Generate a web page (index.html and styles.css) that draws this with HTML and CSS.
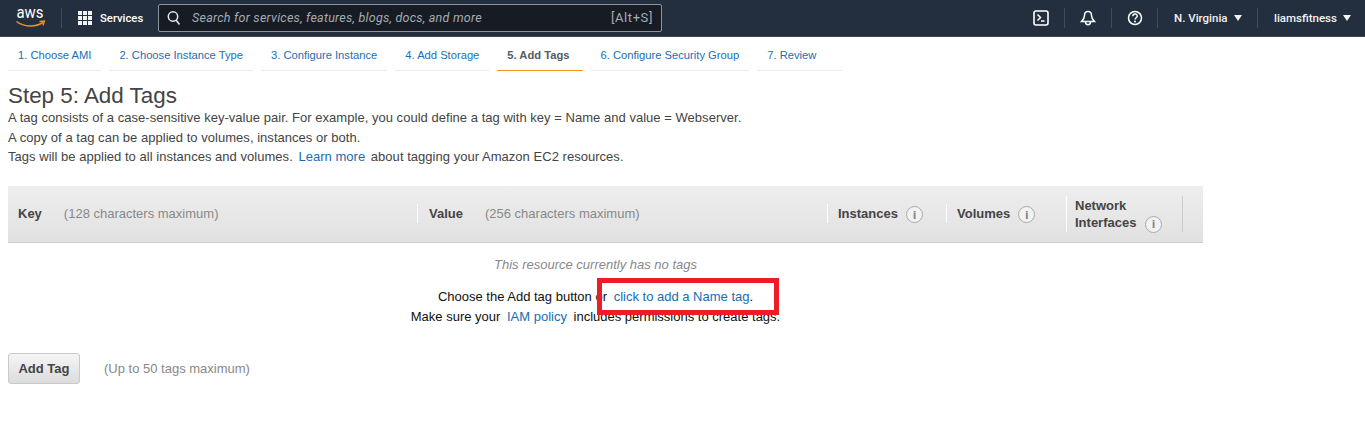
FILE: index.html
```html
<!DOCTYPE html>
<html lang="en">
<head>
<meta charset="utf-8">
<title>Step 5: Add Tags</title>
<link rel="stylesheet" href="styles.css">
</head>
<body>
<header class="topbar">
  <svg class="logo" width="34" height="22" viewBox="0 0 34 22">
    <text x="1.500" y="11" class="logo-text" textLength="27" lengthAdjust="spacingAndGlyphs">aws</text>
    <path d="M1.500 14.500C9 20 20 20.500 28 15.500" fill="none" stroke="#ec912d" stroke-width="1.500"/>
    <path d="M24.500 14.500l5-.5-1.500 4.500" fill="none" stroke="#ec912d" stroke-width="1.300"/>
  </svg>
  <span class="bar-sep sep-logo"></span>
  <div class="services">
    <span class="grid-icon"><i></i><i></i><i></i><i></i><i></i><i></i><i></i><i></i><i></i></span>
    <span>Services</span>
  </div>
  <div class="search">
    <svg width="14" height="16" viewBox="0 0 14 16"><circle cx="6" cy="6.500" r="4.700" fill="none" stroke="#e8eaea" stroke-width="1.500"/><path d="M9.200 10.200l3.300 4.300" stroke="#e8eaea" stroke-width="1.500"/></svg>
    <span class="search-text">Search for services, features, blogs, docs, and more</span>
    <span class="search-key">[Alt+S]</span>
  </div>
  <div class="bar-right">
    <span class="icon-cell cell-term">
      <svg width="16" height="16" viewBox="0 0 16 16"><rect x="1" y="1" width="14" height="14" rx="2" fill="none" stroke="#fff" stroke-width="1.600"/><path d="M4.500 4.500l3 3-3 3M8 11h3.500" fill="none" stroke="#fff" stroke-width="1.500"/></svg>
    </span>
    <span class="bar-sep"></span>
    <span class="icon-cell cell-bell">
      <svg width="16" height="16" viewBox="0 0 16 16"><path d="M8 1.500c-2.500 0-3.500 2-3.500 4 0 2.500-1 4-3 6h13c-2-2-3-3.500-3-6 0-2-1-4-3.500-4z" fill="none" stroke="#fff" stroke-width="1.500"/><path d="M5.500 12c0 3.500 5 3.500 5 0" fill="none" stroke="#fff" stroke-width="1.500"/></svg>
    </span>
    <span class="bar-sep"></span>
    <span class="icon-cell cell-help">
      <svg width="16" height="16" viewBox="0 0 16 16"><circle cx="8" cy="8" r="6.500" fill="none" stroke="#fff" stroke-width="1.500"/><path d="M5.800 6.300c0-3 4.500-3 4.500-.2 0 1.700-2.300 1.700-2.300 3.500" fill="none" stroke="#fff" stroke-width="1.400"/><circle cx="8" cy="11.500" r="1" fill="#fff"/></svg>
    </span>
    <span class="bar-sep"></span>
    <span class="menu menu-region">N. Virginia<b class="caret"></b></span>
    <span class="bar-sep"></span>
    <span class="menu menu-user">liamsfitness<b class="caret"></b></span>
  </div>
</header>

<nav class="steps">
  <a class="step">1. Choose AMI</a>
  <a class="step">2. Choose Instance Type</a>
  <a class="step">3. Configure Instance</a>
  <a class="step">4. Add Storage</a>
  <a class="step current">5. Add Tags</a>
  <a class="step">6. Configure Security Group</a>
  <a class="step last">7. Review</a>
</nav>

<main class="content">
  <h1>Step 5: Add Tags</h1>
  <p>A tag consists of a case-sensitive key-value pair. For example, you could define a tag with key = Name and value = Webserver.</p>
  <p>A copy of a tag can be applied to volumes, instances or both.</p>
  <p>Tags will be applied to all instances and volumes. <a class="link learn">Learn more</a> about tagging your Amazon EC2 resources.</p>

  <div class="table-head">
    <div class="col col-key"><strong>Key</strong><span class="hint">(128 characters maximum)</span></div>
    <div class="col col-value"><strong>Value</strong><span class="hint">(256 characters maximum)</span></div>
    <div class="col col-inst"><strong>Instances</strong><span class="info">i</span></div>
    <div class="col col-vol"><strong>Volumes</strong><span class="info">i</span></div>
    <div class="col col-net"><strong>Network<br>Interfaces <span class="info inline">i</span></strong></div>
  </div>

  <div class="empty">
    <div class="empty-title">This resource currently has no tags</div>
    <div class="empty-line">Choose the Add tag button or <span class="mark"><a class="link name-tag">click to add a Name tag</a>.</span></div>
    <div class="empty-line">Make sure your <a class="link policy">IAM policy</a> includes permissions to create tags.</div>
  </div>

  <div class="actions">
    <button class="btn" type="button">Add Tag</button>
    <span class="limit">(Up to 50 tags maximum)</span>
  </div>
</main>
</body>
</html>
```

FILE: styles.css
```css
*, *::after { box-sizing: border-box; }
html, body { margin: 0; padding: 0; }
body {
  background: #fff;
  font-family: "Liberation Sans", Arial, sans-serif;
  font-size: 13px;
  color: #444;
  height: 421px;
  overflow: hidden;
}
.topbar {
  height: 37px;
  background: #232f3e;
  display: flex;
  align-items: center;
  padding-left: 15px;
  color: #fff;
  border-bottom: 1px solid #3b4654;
}
.logo { flex: none; overflow: visible; }
.logo-text { font-family: "Roboto", sans-serif; font-size: 17px; fill: #fff; }
.bar-sep { width: 1px; height: 20px; background: #414b58; flex: none; }
.sep-logo { margin-left: 12px; }
.services {
  display: flex;
  align-items: center;
  gap: 8px;
  margin-left: 16px;
  font-family: "Roboto", sans-serif;
  font-size: 11.300px;
  font-weight: 500;
  width: 80px;
  flex: none;
}
.grid-icon {
  display: grid;
  grid-template-columns: repeat(3, 4px);
  grid-auto-rows: 4px;
  gap: 1px;
}
.grid-icon i { background: #f2f3f3; display: block; }
.search {
  width: 504px;
  height: 28px;
  flex: none;
  margin-bottom: 1px;
  background: #161b24;
  border: 1px solid #8d959f;
  border-radius: 2px;
  display: flex;
  align-items: center;
  padding: 0 8px;
  color: #a6acb3;
  font-family: "Roboto", sans-serif;
  font-size: 12.500px;
}
.search svg { flex: none; }
.search-text { font-style: italic; margin-left: 11px; letter-spacing: .25px; }
.search-key { margin-left: auto; font-size: 13px; letter-spacing: .6px; }
.bar-right { margin-left: auto; display: flex; align-items: center; }
.icon-cell { display: flex; align-items: center; justify-content: center; }
.cell-term { width: 46px; }
.cell-bell { width: 46px; }
.cell-help { width: 45px; }
.menu {
  font-family: "Roboto", sans-serif;
  font-size: 11.500px;
  font-weight: 500;
  display: flex;
  align-items: center;
  color: #f2f3f3;
  padding-left: 16px;
}
.menu-region { width: 99px; }
.menu-user { width: 107px; }
.caret {
  width: 0;
  height: 0;
  border-left: 4px solid transparent;
  border-right: 4px solid transparent;
  border-top: 6px solid #f2f3f3;
  margin-left: 6px;
}
.steps {
  display: flex;
  gap: 8px;
  padding-left: 8px;
  height: 34px;
}
.step {
  display: flex;
  align-items: center;
  height: 34px;
  padding: 2px 10px 0;
  color: #196eb8;
  font-size: 11.200px;
  border-bottom: 1px solid #eaeded;
}
.current { color: #545b64; font-weight: 700; padding: 2px 13px 0 10px; border-bottom-color: #f7981d; }
.last { padding-right: 26px; }
.content { padding-left: 8px; }
h1 {
  margin: 13px 0 0;
  font-size: 22.400px;
  line-height: 24px;
  font-weight: 400;
  color: #444;
}
p {
  margin: 0;
  font-size: 13px;
  line-height: 19.500px;
  letter-spacing: .03px;
  color: #444;
}
.link { color: #146eb4; }
.learn { margin: 0 2px; }
.table-head {
  display: flex;
  width: 1195px;
  height: 57px;
  margin-top: 19px;
  background: linear-gradient(#eee, #e1e1e1);
  border-bottom: 1px solid #ccc;
  align-items: center;
}
.col {
  display: flex;
  align-items: center;
  font-size: 13px;
  color: #444;
}
.col strong { font-weight: 700; }
.hint { color: #888; margin-left: 22px; }
.col-key { width: 410px; height: 19px; padding-left: 10px; border-right: 1px solid #fff; }
.col-value { width: 410px; height: 19px; padding-left: 11px; border-right: 1px solid #fff; }
.col-inst { width: 119px; height: 19px; padding-left: 10px; border-right: 1px solid #fff; }
.col-vol { width: 119px; height: 19px; padding-left: 10px; }
.col-net { width: 117px; height: 36px; padding: 5px 0 0 8px; line-height: 17px; border-right: 1px solid #ccc; border-left: 1px solid #fff; }
.info {
  width: 17px;
  height: 17px;
  border: 1px solid #aaa;
  border-radius: 50%;
  color: #888;
  font-family: "DejaVu Sans", sans-serif;
  font-size: 10.500px;
  font-weight: 700;
  display: inline-flex;
  align-items: center;
  justify-content: center;
  margin-left: 8px;
  background: #f2f2f2;
  position: relative;
  top: 1px;
}
.info.inline { vertical-align: -4px; margin-left: 5px; top: -3px; }
.empty { width: 1175px; text-align: center; color: #111; }
.empty-title { font-style: italic; color: #888; margin-top: 14px; line-height: 16px; }
.empty-line { line-height: 20px; }
.empty-title + .empty-line { margin-top: 14px; }
.mark { position: relative; }
.mark::after {
  content: "";
  position: absolute;
  left: -14px;
  top: -11px;
  width: 182px;
  height: 37px;
  border: 5px solid #ee1c25;
  pointer-events: none;
}
.name-tag { margin-left: 3px; }
.policy { margin: 0 3px; }
.actions {
  display: flex;
  align-items: center;
  margin-top: 26px;
  gap: 24px;
}
.btn {
  width: 72px;
  height: 31px;
  border: 1px solid #c9c9c9;
  border-radius: 3px;
  background: linear-gradient(#f5f5f5, #dcdcdc);
  color: #444;
  font-family: "Liberation Sans", sans-serif;
  font-size: 13px;
  font-weight: 700;
  padding: 0;
}
.limit { color: #888; font-size: 13px; }
```
